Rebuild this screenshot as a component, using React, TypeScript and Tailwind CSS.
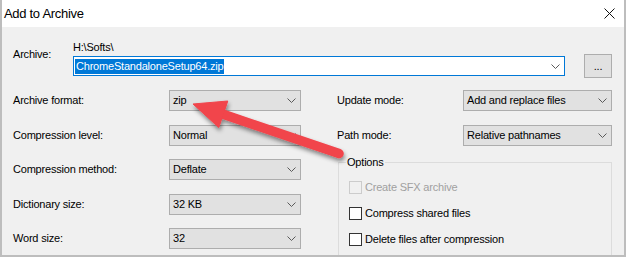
import React from "react";

function Chevron() {
  return (
    <svg width="9" height="5" viewBox="0 0 9 5" className="shrink-0">
      <path d="M0.5 0.5 L4.5 4.5 L8.5 0.5" fill="none" stroke="#5a5a5a" strokeWidth="1" />
    </svg>
  );
}

function Select({ value, width }: { value: string; width: string }) {
  return (
    <div
      className={`${width} flex h-[21px] items-center justify-between border border-[#adadad] bg-[#e1e1e1] pl-[3px] pr-[4px]`}
    >
      <span className="leading-[15px]">{value}</span>
      <Chevron />
    </div>
  );
}

function Row({ label, value, labelWidth, selectWidth }: { label: string; value: string; labelWidth: string; selectWidth: string }) {
  return (
    <div className="flex h-[21px] items-center">
      <span className={`${labelWidth} leading-[15px]`}>{label}</span>
      <Select value={value} width={selectWidth} />
    </div>
  );
}

function Check({ label, disabled }: { label: string; disabled?: boolean }) {
  return (
    <div className="flex h-[26px] items-center gap-[3px]">
      <span
        className={
          disabled
            ? "h-[13px] w-[13px] border border-[#cccccc] bg-[#f0f0f0]"
            : "h-[13px] w-[13px] border border-[#333333] bg-white"
        }
      />
      <span className={disabled ? "leading-[15px] text-[#a0a0a0]" : "leading-[15px]"}>{label}</span>
    </div>
  );
}

export default function App() {
  return (
    <div className="relative flex h-[257px] w-[626px] flex-col overflow-hidden border-x-2 border-b-2 border-[#bdbdbd] bg-[#f0f0f0] font-['Liberation_Sans',Arial,sans-serif] text-[11px] tracking-[-0.2px] text-black">
      <div className="flex h-[27px] shrink-0 items-center justify-between bg-white pl-[2px] pr-[9px]">
        <span className="text-[13px] tracking-[-0.3px]">Add to Archive</span>
        <svg width="11" height="11" viewBox="0 0 11 11">
          <path d="M0.5 0.5 L10.5 10.5 M10.5 0.5 L0.5 10.5" stroke="#111" strokeWidth="1" />
        </svg>
      </div>

      <div className="flex-1 pl-[11px] pt-[13px]">
        <div className="flex">
          <div className="w-[60px] pt-[6px]">
            <span className="leading-[15px]">Archive:</span>
          </div>
          <div className="w-[492px]">
            <div className="h-[15px] leading-[15px]">H:\Softs\</div>
            <div className="mt-[1px] flex h-[20px] items-center justify-between border border-[#0078d7] bg-white pl-[1px] pr-[4px]">
              <span className="h-[15px] bg-[#0078d7] px-[1px] leading-[15px] text-white">
                ChromeStandaloneSetup64.zip
              </span>
              <Chevron />
            </div>
          </div>
          <div className="ml-[19px] mt-[14px] flex h-[24px] w-[28px] items-center justify-center border border-[#adadad] bg-[#e1e1e1] leading-none">
            ...
          </div>
        </div>

        <div className="mt-[12px] flex">
          <div className="flex w-[288px] flex-col gap-[13.5px]">
            <Row label="Archive format:" value="zip" labelWidth="w-[156px]" selectWidth="w-[132px]" />
            <Row label="Compression level:" value="Normal" labelWidth="w-[156px]" selectWidth="w-[132px]" />
            <Row label="Compression method:" value="Deflate" labelWidth="w-[156px]" selectWidth="w-[132px]" />
            <Row label="Dictionary size:" value="32 KB" labelWidth="w-[156px]" selectWidth="w-[132px]" />
            <Row label="Word size:" value="32" labelWidth="w-[156px]" selectWidth="w-[132px]" />
          </div>
          <div className="ml-[36px] flex w-[275px] flex-col">
            <div className="flex flex-col gap-[13.5px]">
              <Row label="Update mode:" value="Add and replace files" labelWidth="w-[126px]" selectWidth="w-[149px]" />
              <Row label="Path mode:" value="Relative pathnames" labelWidth="w-[126px]" selectWidth="w-[149px]" />
            </div>
            <fieldset className="ml-[1px] mt-[9px] h-[120px] w-[274px] border border-[#dcdcdc] pl-[10px] pt-[5px]">
              <legend className="ml-[-3px] px-[1px] leading-[15px]">Options</legend>
              <Check label="Create SFX archive" disabled />
              <Check label="Compress shared files" />
              <Check label="Delete files after compression" />
            </fieldset>
          </div>
        </div>
      </div>

      <svg className="pointer-events-none absolute left-[-2px] top-0" width="626" height="257" viewBox="0 0 626 257">
        <defs>
          <filter id="arrowShadow" x="-20%" y="-40%" width="140%" height="180%">
            <feDropShadow dx="1" dy="3" stdDeviation="2" floodColor="#000" floodOpacity="0.45" />
          </filter>
        </defs>
        <g filter="url(#arrowShadow)" fill="#f1444b" stroke="#f1444b">
          <line x1="221" y1="113.5" x2="339" y2="153.6" strokeWidth="9.5" strokeLinecap="round" />
          <polygon points="193,104 227.8,101 218.8,127.6" strokeWidth="1" strokeLinejoin="round" />
        </g>
      </svg>
    </div>
  );
}
